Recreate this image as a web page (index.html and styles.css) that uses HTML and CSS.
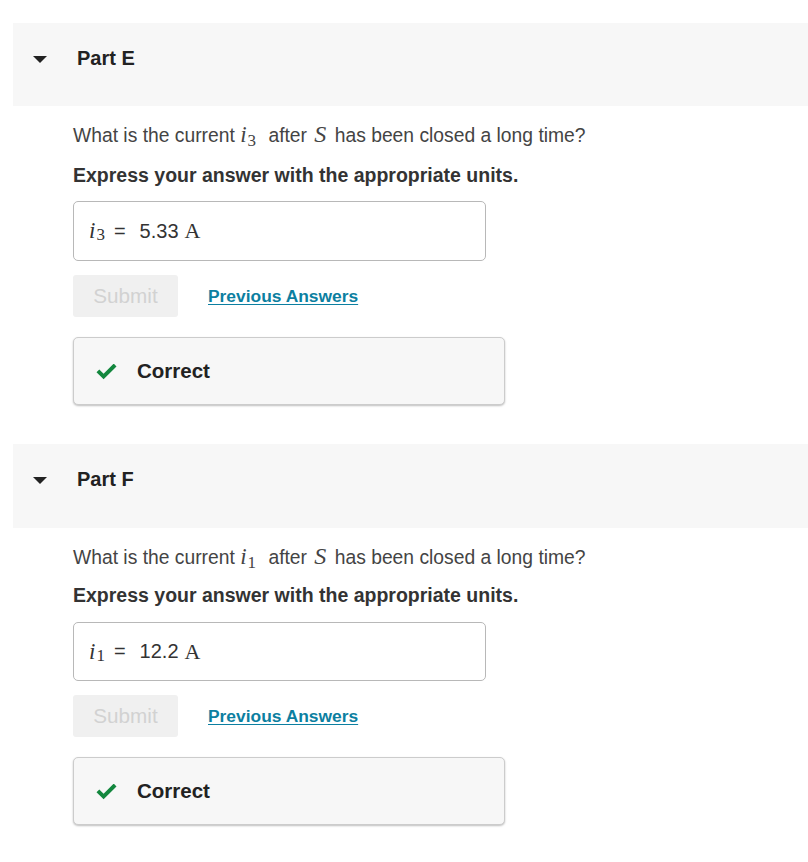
FILE: index.html
```html
<!DOCTYPE html>
<html lang="en">
<head>
<meta charset="utf-8">
<title>Parts E and F</title>
<link rel="stylesheet" href="styles.css">
</head>
<body>
<div class="page">
  <section class="part">
    <div class="part-head">
      <span class="caret"></span>
      <h2 class="part-title">Part E</h2>
    </div>
    <div class="part-body">
      <p class="question">What is the current <span class="mi">i</span><span class="sub">3</span> after <span class="mi mi-s">S</span> has been closed a long time?</p>
      <p class="instr">Express your answer with the appropriate units.</p>
      <div class="answer answer-e">
        <span class="mi">i</span><span class="sub">3</span><span class="eq">=</span><span class="val">5.33</span><span class="unit">A</span>
      </div>
      <div class="actions">
        <button class="submit" disabled>Submit</button>
        <a class="prev" href="#">Previous Answers</a>
      </div>
      <div class="feedback">
        <svg class="check" viewBox="0 0 21 16" width="21" height="16"><path d="M0.5 8.2 L3.3 5.4 L7.6 9.7 L17.7 -0.4 L20.5 2.4 L7.6 15.3 Z" fill="#13873e"/></svg>
        <span class="fb-text">Correct</span>
      </div>
    </div>
  </section>

  <section class="part">
    <div class="part-head part-head-f">
      <span class="caret"></span>
      <h2 class="part-title">Part F</h2>
    </div>
    <div class="part-body">
      <p class="question">What is the current <span class="mi">i</span><span class="sub">1</span> after <span class="mi mi-s">S</span> has been closed a long time?</p>
      <p class="instr instr-f">Express your answer with the appropriate units.</p>
      <div class="answer answer-f">
        <span class="mi">i</span><span class="sub">1</span><span class="eq">=</span><span class="val">12.2</span><span class="unit">A</span>
      </div>
      <div class="actions">
        <button class="submit" disabled>Submit</button>
        <a class="prev" href="#">Previous Answers</a>
      </div>
      <div class="feedback">
        <svg class="check" viewBox="0 0 21 16" width="21" height="16"><path d="M0.5 8.2 L3.3 5.4 L7.6 9.7 L17.7 -0.4 L20.5 2.4 L7.6 15.3 Z" fill="#13873e"/></svg>
        <span class="fb-text">Correct</span>
      </div>
    </div>
  </section>
</div>
</body>
</html>
```

FILE: styles.css
```css
html, body {
  margin: 0;
  padding: 0;
  background: #ffffff;
}

body {
  font-family: "Liberation Sans", Arial, sans-serif;
  color: #333333;
}

.page {
  padding: 23px 0 0 13px;
}

.part-head {
  background: #f7f7f7;
  height: 83px;
  display: flex;
  align-items: flex-start;
  padding-top: 23px;
  box-sizing: border-box;
}

.part-head-f {
  height: 84px;
}

.caret {
  width: 0;
  height: 0;
  margin: 10px 0 0 20px;
  border-left: 7.5px solid transparent;
  border-right: 7.5px solid transparent;
  border-top: 7.5px solid #222222;
}

.part-title {
  margin: 0 0 0 30px;
  font-size: 20px;
  line-height: 24px;
  font-weight: bold;
  color: #222222;
}

.part-body {
  padding: 15px 0 0 60px;
}

.question {
  margin: 0;
  font-size: 19.3px;
  line-height: 26px;
  color: #444444;
}

.instr {
  margin: 12px 0 0;
  font-size: 19.5px;
  line-height: 26px;
  font-weight: bold;
  color: #333333;
}

.instr-f {
  margin-top: 10px;
}

.mi {
  font-family: "Liberation Serif", "Times New Roman", serif;
  font-style: italic;
  font-size: 23px;
}

.mi-s {
  font-size: 24px;
  margin: 0 3px 0 2px;
}

.sub {
  font-family: "Liberation Serif", "Times New Roman", serif;
  font-size: 17px;
  position: relative;
  top: 4px;
  margin: 0 7px 0 1px;
}

.answer {
  margin-top: 13px;
  width: 413px;
  box-sizing: border-box;
  border: 1px solid #b8b8b8;
  border-radius: 5px;
  display: flex;
  align-items: center;
  padding-left: 15px;
  font-size: 20px;
  color: #333333;
}

.answer-e { height: 60px; }
.answer-f { height: 59px; margin-top: 14px; }

.answer .sub {
  margin-right: 9px;
}

.eq {
  margin: 0 14px 0 0;
  font-size: 20px;
}

.val {
  font-size: 20px;
}

.unit {
  font-family: "Liberation Serif", "Times New Roman", serif;
  font-size: 22px;
  margin-left: 6px;
}

.actions {
  margin-top: 14px;
  display: flex;
  align-items: center;
  gap: 30px;
}

.submit {
  width: 105px;
  height: 42px;
  border: none;
  border-radius: 3px;
  background: #f0f0f0;
  color: #d2d2d2;
  font-family: "Liberation Sans", Arial, sans-serif;
  font-size: 20.7px;
  padding: 0;
}

.prev {
  font-size: 17.4px;
  font-weight: bold;
  color: #0c7fa1;
  text-decoration: underline;
  text-underline-offset: 2px;
}

.feedback {
  margin-top: 20px;
  width: 432px;
  height: 68px;
  box-sizing: border-box;
  background: #f7f7f7;
  border: 1px solid #cccccc;
  border-radius: 5px;
  box-shadow: 0 1px 2px rgba(0, 0, 0, 0.25);
  display: flex;
  align-items: center;
  padding-left: 22px;
  margin-bottom: 39px;
}

.check {
  display: block;
  margin-top: 1px;
}

.fb-text {
  margin-left: 20px;
  font-size: 20.5px;
  font-weight: bold;
  color: #222222;
}
```
